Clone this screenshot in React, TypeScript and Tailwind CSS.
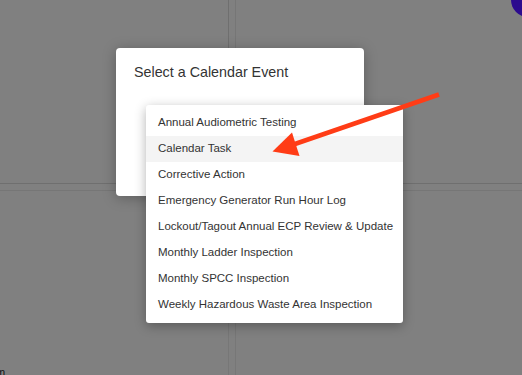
import React from 'react';

const events = [
  'Annual Audiometric Testing',
  'Calendar Task',
  'Corrective Action',
  'Emergency Generator Run Hour Log',
  'Lockout/Tagout Annual ECP Review & Update',
  'Monthly Ladder Inspection',
  'Monthly SPCC Inspection',
  'Weekly Hazardous Waste Area Inspection',
];

export default function App() {
  const hovered = 1;
  return (
    <div
      className="relative w-[522px] h-[375px] overflow-hidden bg-[#808080]"
      style={{ fontFamily: '"Liberation Sans", Arial, Helvetica, sans-serif' }}
    >
      {/* calendar behind the overlay */}
      <div className="grid h-full grid-cols-[229px_7px_1fr] grid-rows-[184px_7px_1fr]">
        <div className="border-r border-b border-[#6f6f6f]" />
        <div className="border-r border-b border-[#767676]" />
        <div className="border-b border-[#6f6f6f]" />
        <div className="border-r border-b border-[#767676]" />
        <div className="border-r border-b border-[#767676]" />
        <div className="border-b border-[#767676]" />
        <div className="flex flex-col justify-end overflow-hidden border-r border-[#777777]">
          <span className="-ml-[4px] -mb-[3px] text-[11px] leading-none text-[#111]">m</span>
        </div>
        <div className="border-r border-[#777777]" />
        <div />
      </div>

      {/* purple blob at top right */}
      <div className="absolute left-[511px] top-[-17px] h-[34px] w-[34px] rounded-full bg-[#2c0b8e]" />

      {/* modal */}
      <div className="absolute left-[116px] top-[48px] h-[148px] w-[248px] rounded-[4px] bg-white shadow-[0_2px_14px_rgba(0,0,0,0.28)]">
        <div className="px-[18px] pt-[15px] text-[14.3px] leading-[18px] text-[#333]">
          Select a Calendar Event
        </div>
      </div>

      {/* dropdown */}
      <div className="absolute left-[146px] top-[105px] w-[257px] rounded-[3px] bg-white py-[5px] shadow-[0_3px_12px_rgba(0,0,0,0.3)]">
        {events.map((e, i) => (
          <div
            key={e}
            className={
              'flex h-[26px] items-center whitespace-nowrap pl-[12px] text-[11.5px] text-[#333] ' +
              (i === hovered ? 'bg-[#f4f4f4]' : '')
            }
          >
            {e}
          </div>
        ))}
      </div>

      {/* annotation arrow */}
      <svg className="absolute left-0 top-0" width="522" height="375" viewBox="0 0 522 375">
        <line x1="439" y1="94.5" x2="292" y2="145" stroke="#ff3c16" strokeWidth="4.5" />
        <polygon points="272.5,151.5 292,132.5 299.5,156" fill="#ff3c16" />
      </svg>
    </div>
  );
}
